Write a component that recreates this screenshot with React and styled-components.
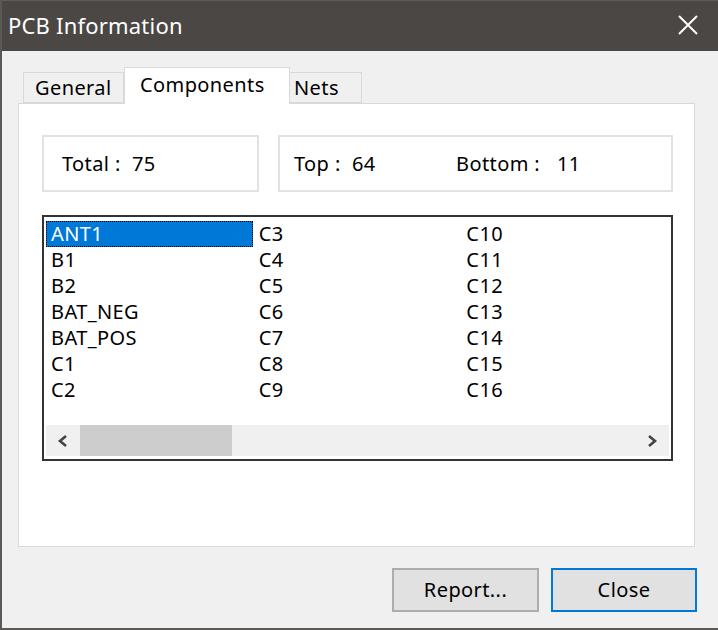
import React from 'react';
import styled, { createGlobalStyle } from 'styled-components';

const Global = createGlobalStyle`
  html, body { margin: 0; padding: 0; background: #f0f0f0; }
  body { font-family: "Noto Sans", "Open Sans", sans-serif; color: #000; }
`;

const Win = styled.div`
  width: 718px;
  height: 630px;
  box-sizing: border-box;
  background: #f0f0f0;
  border-left: 2px solid #5b5957;
  border-bottom: 2px solid #5b5957;
  display: flex;
  flex-direction: column;
  overflow: hidden;
`;

const TitleBar = styled.div`
  height: 51px;
  flex: none;
  background: #4a4745;
  border-top: 1px solid #5e5b59;
  box-sizing: border-box;
  display: flex;
  align-items: center;
  justify-content: space-between;
  padding: 0 19px 2px 6px;
  color: #fff;
  font-size: 22px;
  letter-spacing: 0.2px;
`;

const Body = styled.div`
  flex: 1;
  display: flex;
  flex-direction: column;
  padding: 17px 21px 0 16px;
  font-size: 20px;
  letter-spacing: 0.4px;
`;

const TabStrip = styled.div`
  display: flex;
  align-items: flex-end;
  height: 35px;
  padding-left: 5px;
  position: relative;
  z-index: 1;
`;

const Tab = styled.div`
  box-sizing: border-box;
  width: ${p => p.w}px;
  height: ${p => (p.active ? 37 : 31)}px;
  margin-bottom: ${p => (p.active ? -1 : 0)}px;
  padding-left: ${p => p.pl}px;
  padding-top: ${p => (p.active ? 4 : 2)}px;
  background: ${p => (p.active ? '#fff' : '#f0f0f0')};
  border: 1px solid #d9d9d9;
  border-bottom: ${p => (p.active ? 'none' : '1px solid #d9d9d9')};
  border-left: ${p => (p.noLeft ? 'none' : '1px solid #d9d9d9')};
  line-height: 26px;
  white-space: nowrap;
`;

const Panel = styled.div`
  box-sizing: border-box;
  width: 677px;
  height: 444px;
  background: #fff;
  border: 1px solid #d9d9d9;
  padding: 31px 21px 0 23px;
  display: flex;
  flex-direction: column;
  gap: 23px;
`;

const GroupRow = styled.div`
  display: flex;
  gap: 19px;
`;

const Group = styled.div`
  box-sizing: border-box;
  width: ${p => p.w}px;
  height: 57px;
  border: 2px solid #e2e2e2;
  display: flex;
  align-items: center;
  padding-left: ${p => p.pl}px;
  white-space: pre;
`;

const Stat = styled.span`
  display: inline-block;
  width: ${p => p.w || 'auto'};
`;

const ListBox = styled.div`
  box-sizing: border-box;
  height: 246px;
  border: 2px solid #333;
  padding: 2px 2px 3px 2px;
  display: flex;
  flex-direction: column;
`;

const Columns = styled.div`
  flex: 1;
  display: flex;
  padding-top: 2px;
`;

const Column = styled.div`
  width: 208px;
  display: flex;
  flex-direction: column;
`;

const Item = styled.div`
  box-sizing: border-box;
  height: 26px;
  line-height: 24px;
  padding-left: 4px;
  background: ${p => (p.sel ? '#0078d7' : 'transparent')};
  color: ${p => (p.sel ? '#fff' : '#000')};
  border: 1px dotted ${p => (p.sel ? '#000' : 'transparent')};
  width: ${p => (p.sel ? '207px' : 'auto')};
`;

const HScroll = styled.div`
  height: 31px;
  background: #f0f0f0;
  display: flex;
  align-items: center;
`;

const Arrow = styled.div`
  width: 34px;
  height: 31px;
  display: flex;
  align-items: center;
  justify-content: center;
`;

const Track = styled.div`
  flex: 1;
  height: 31px;
  display: flex;
  align-items: center;
`;

const Thumb = styled.div`
  width: 152px;
  height: 31px;
  background: #cdcdcd;
`;

const Footer = styled.div`
  display: flex;
  justify-content: flex-end;
  gap: 12px;
  padding-top: 21px;
`;

const Button = styled.div`
  box-sizing: border-box;
  width: ${p => p.w}px;
  height: 44px;
  background: #e1e1e1;
  border: ${p => (p.primary ? '2px solid #0078d7' : '2px solid #adadad')};
  display: flex;
  align-items: center;
  justify-content: center;
  padding-bottom: 2px;
`;

const cols = [
  ['ANT1', 'B1', 'B2', 'BAT_NEG', 'BAT_POS', 'C1', 'C2'],
  ['C3', 'C4', 'C5', 'C6', 'C7', 'C8', 'C9'],
  ['C10', 'C11', 'C12', 'C13', 'C14', 'C15', 'C16'],
];

const Chevron = ({ dir }) => (
  <svg width="12" height="14" viewBox="0 0 12 14">
    <path
      d={dir === 'left' ? 'M9 2 L3 7 L9 12' : 'M3 2 L9 7 L3 12'}
      fill="none"
      stroke="#444"
      strokeWidth="2.6"
    />
  </svg>
);

export default function App() {
  return (
    <>
      <Global />
      <Win>
        <TitleBar>
          <span>PCB Information</span>
          <svg width="22" height="22" viewBox="0 0 22 22">
            <path d="M2 2 L20 20 M20 2 L2 20" stroke="#fff" strokeWidth="2" />
          </svg>
        </TitleBar>
        <Body>
          <TabStrip>
            <Tab w={101} pl={11}>General</Tab>
            <Tab w={166} pl={15} active>Components</Tab>
            <Tab w={72} pl={4} noLeft>Nets</Tab>
          </TabStrip>
          <Panel>
            <GroupRow>
              <Group w={217} pl={18}>Total :  75</Group>
              <Group w={395} pl={14}>
                <Stat w="162px">Top :  64</Stat>
                <Stat>Bottom :   11</Stat>
              </Group>
            </GroupRow>
            <ListBox>
              <Columns>
                {cols.map((c, i) => (
                  <Column key={i}>
                    {c.map((name, j) => (
                      <Item key={name} sel={i === 0 && j === 0}>{name}</Item>
                    ))}
                  </Column>
                ))}
              </Columns>
              <HScroll>
                <Arrow><Chevron dir="left" /></Arrow>
                <Track><Thumb /></Track>
                <Arrow><Chevron dir="right" /></Arrow>
              </HScroll>
            </ListBox>
          </Panel>
          <Footer>
            <Button w={147}>Report...</Button>
            <Button w={146} primary>Close</Button>
          </Footer>
        </Body>
      </Win>
    </>
  );
}
